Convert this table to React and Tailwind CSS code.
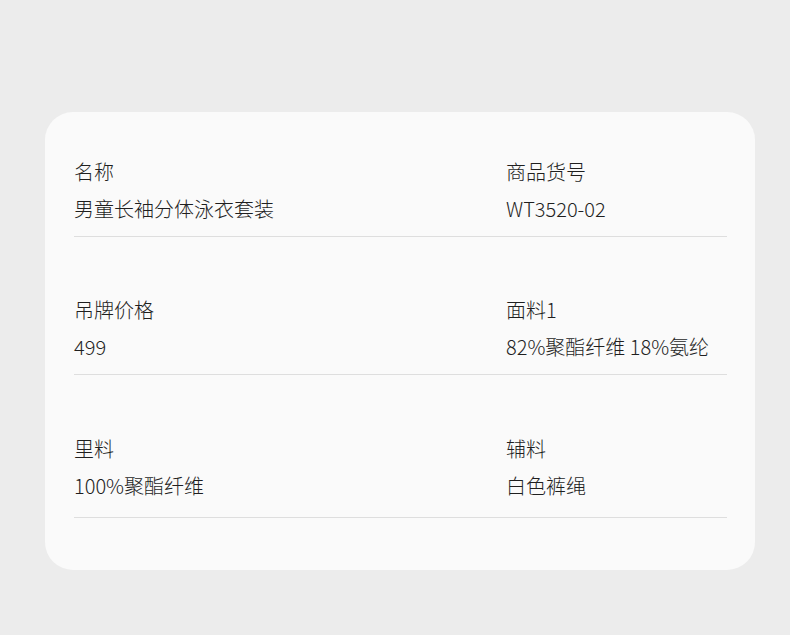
import React from 'react';

const rows = [
  [
    { label: '名称', value: '男童长袖分体泳衣套装' },
    { label: '商品货号', value: 'WT3520-02' },
  ],
  [
    { label: '吊牌价格', value: '499' },
    { label: '面料1', value: '82%聚酯纤维 18%氨纶' },
  ],
  [
    { label: '里料', value: '100%聚酯纤维' },
    { label: '辅料', value: '白色裤绳' },
  ],
];

const App = () => {
  return (
    <div
      className="min-h-screen w-full bg-[#ececec] pt-[112px] pl-[45px] pr-[35px] pb-[50px]"
      style={{ fontFamily: '"Noto Sans CJK SC", "Noto Sans", sans-serif' }}
    >
      <div className="bg-[#fafafa] rounded-[28px] pl-[29px] pr-[28px] pt-[46px] pb-[52px] text-[20px] font-light text-[#1f1f1f]">
        {rows.map((row, i) => (
          <div
            key={i}
            className={`grid grid-cols-[432px_1fr] border-b border-[#dedede] ${i === 2 ? 'pb-[17px] mt-[60px]' : 'pb-[13px]'} ${i === 1 ? 'mt-[59px]' : ''}`}
          >
            {row.map((cell) => (
              <div key={cell.label}>
                <div className="leading-[28px]">{cell.label}</div>
                <div className="leading-[28px] mt-[9px]">{cell.value}</div>
              </div>
            ))}
          </div>
        ))}
      </div>
    </div>
  );
};

export default App;
